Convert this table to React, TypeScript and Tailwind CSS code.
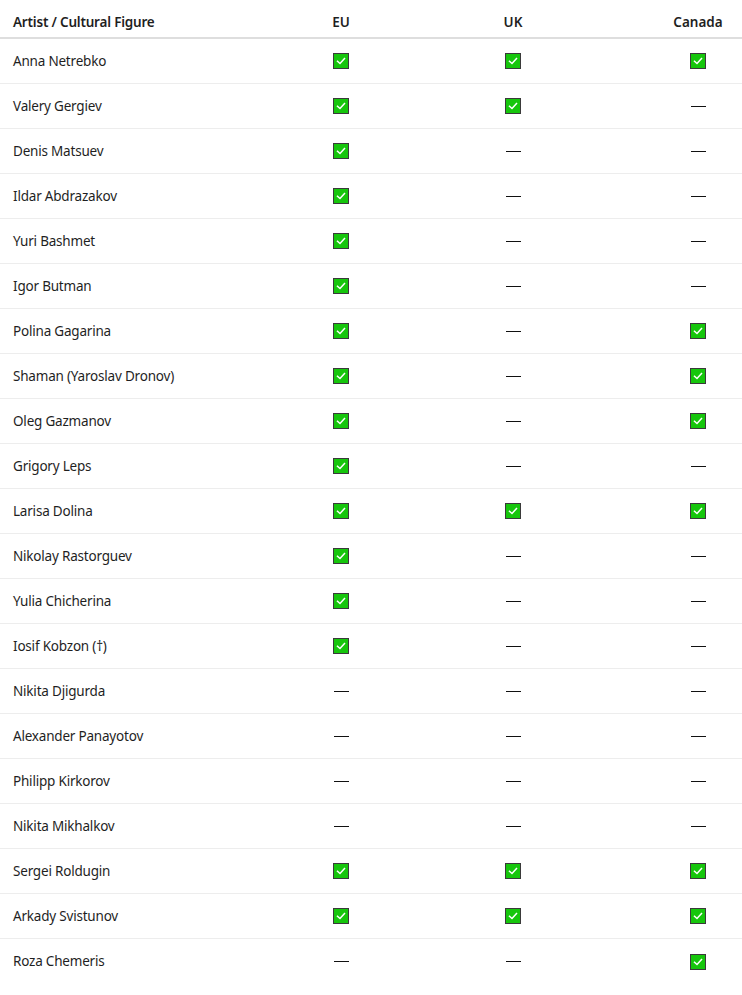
import React from "react";

type R = [string, boolean, boolean, boolean];
const rows: R[] = [
  ["Anna Netrebko", true, true, true],
  ["Valery Gergiev", true, true, false],
  ["Denis Matsuev", true, false, false],
  ["Ildar Abdrazakov", true, false, false],
  ["Yuri Bashmet", true, false, false],
  ["Igor Butman", true, false, false],
  ["Polina Gagarina", true, false, true],
  ["Shaman (Yaroslav Dronov)", true, false, true],
  ["Oleg Gazmanov", true, false, true],
  ["Grigory Leps", true, false, false],
  ["Larisa Dolina", true, true, true],
  ["Nikolay Rastorguev", true, false, false],
  ["Yulia Chicherina", true, false, false],
  ["Iosif Kobzon (†)", true, false, false],
  ["Nikita Djigurda", false, false, false],
  ["Alexander Panayotov", false, false, false],
  ["Philipp Kirkorov", false, false, false],
  ["Nikita Mikhalkov", false, false, false],
  ["Sergei Roldugin", true, true, true],
  ["Arkady Svistunov", true, true, true],
  ["Roza Chemeris", false, false, true],
];

function Check() {
  return (
    <span className="inline-flex h-[16px] w-[16px] items-center justify-center border border-[#3a3a3a] bg-[#16c60c]">
      <svg width="10" height="10" viewBox="0 0 10 10" fill="none">
        <path d="M1.5 5.2 L4 7.5 L8.5 2.5" stroke="white" strokeWidth="1.5" strokeLinecap="square" />
      </svg>
    </span>
  );
}

function Dash() {
  return <span className="block h-px w-[15px] bg-[#111111]" />;
}

const grid = "grid grid-cols-[310px_62px_282px_88px]";

export default function App() {
  return (
    <div
      className="w-[742px] bg-white text-[13.5px] text-[#1f1f1f]"
      style={{ fontFamily: '"Noto Sans", "Open Sans", Arial, sans-serif' }}
    >
      <div className={`${grid} h-[39px] border-b-2 border-[#dedede] font-semibold`}>
        <div className="flex items-center pl-[13px] pt-[7px] tracking-[-0.2px]">Artist / Cultural Figure</div>
        <div className="flex items-center justify-center pt-[7px]">EU</div>
        <div className="flex items-center justify-center pt-[7px]">UK</div>
        <div className="flex items-center justify-center pt-[7px]">Canada</div>
      </div>
      {rows.map((r, i) => (
        <div
          key={r[0]}
          className={`${grid} h-[45px] ${i < rows.length - 1 ? "border-b border-[#ededed]" : ""}`}
        >
          <div className="flex items-center pl-[13px] tracking-[-0.2px]">{r[0]}</div>
          {[r[1], r[2], r[3]].map((v, j) => (
            <div key={j} className="flex items-center justify-center">
              {v ? <Check /> : <Dash />}
            </div>
          ))}
        </div>
      ))}
    </div>
  );
}
